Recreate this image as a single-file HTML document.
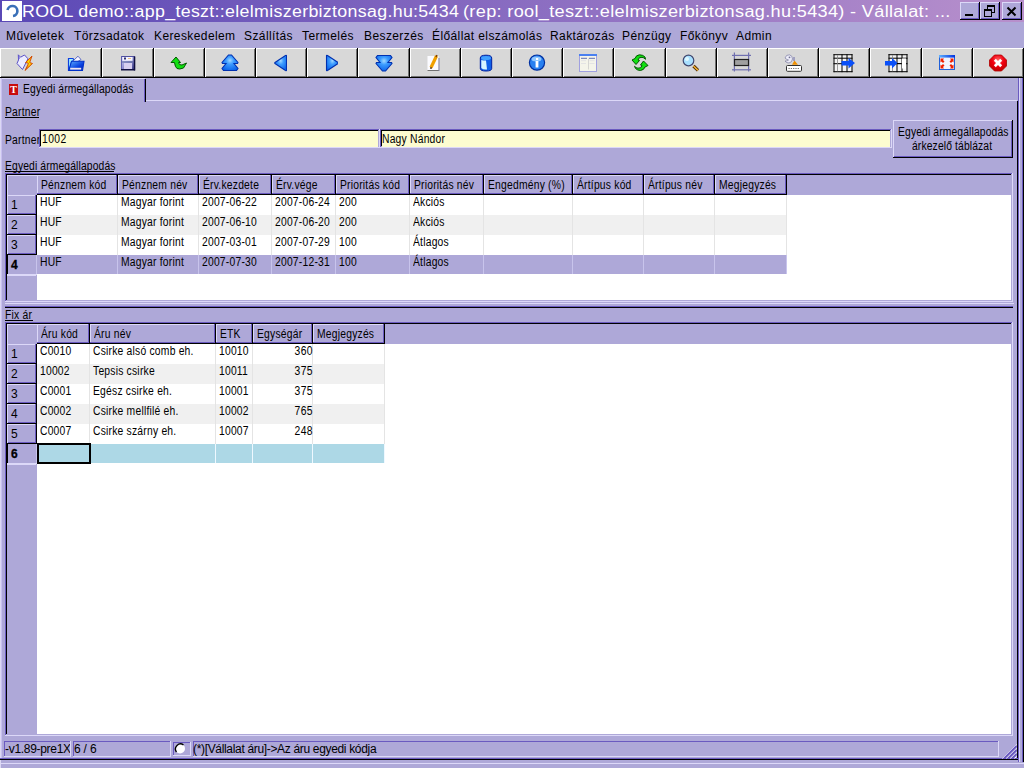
<!DOCTYPE html>
<html><head><meta charset="utf-8"><style>
html,body{margin:0;padding:0;width:1024px;height:768px;overflow:hidden;background:#aea8d8}
body{position:relative;font-family:"Liberation Sans",sans-serif}
div{position:absolute}
.t{white-space:nowrap}
svg{position:absolute}
</style></head><body>
<div style="left:0px;top:0px;width:1024px;height:22px;background:linear-gradient(90deg,#5a48b6,#b890cc);"></div>
<div style="left:2px;top:1px;width:20px;height:20px;background:#ffffff;"></div>
<svg style="position:absolute;left:2px;top:1px" width="20" height="20" viewBox="0 0 20 20"><path d="M5.5 9 A5 5 0 1 1 11 15" fill="none" stroke="#3a70b8" stroke-width="2.6"/></svg>
<div class="t" style="left:22px;top:2.45px;font-size:16px;line-height:20px;color:#fff;letter-spacing:0.3px;transform:scaleX(1.11);transform-origin:0 0;">ROOL demo::app_teszt::elelmiszerbiztonsag.hu:5434</div>
<div class="t" style="left:463px;top:2.45px;font-size:16px;line-height:20px;color:#fff;letter-spacing:0.3px;transform:scaleX(1.131);transform-origin:0 0;">(rep: rool_teszt::elelmiszerbiztonsag.hu:5434) - Vállalat: ...</div>
<div style="left:960px;top:2px;width:20px;height:18px;background:#aea8d8;"></div>
<div style="left:960px;top:2px;width:20px;height:1px;background:#dcd8f8;"></div>
<div style="left:960px;top:2px;width:1px;height:18px;background:#dcd8f8;"></div>
<div style="left:960px;top:19px;width:20px;height:1px;background:#000000;"></div>
<div style="left:979px;top:2px;width:1px;height:18px;background:#000000;"></div>
<div style="left:961px;top:18px;width:18px;height:1px;background:#6a5ac0;"></div>
<div style="left:978px;top:3px;width:1px;height:16px;background:#6a5ac0;"></div>
<div style="left:980px;top:2px;width:20px;height:18px;background:#aea8d8;"></div>
<div style="left:980px;top:2px;width:20px;height:1px;background:#dcd8f8;"></div>
<div style="left:980px;top:2px;width:1px;height:18px;background:#dcd8f8;"></div>
<div style="left:980px;top:19px;width:20px;height:1px;background:#000000;"></div>
<div style="left:999px;top:2px;width:1px;height:18px;background:#000000;"></div>
<div style="left:981px;top:18px;width:18px;height:1px;background:#6a5ac0;"></div>
<div style="left:998px;top:3px;width:1px;height:16px;background:#6a5ac0;"></div>
<div style="left:1002px;top:2px;width:20px;height:18px;background:#aea8d8;"></div>
<div style="left:1002px;top:2px;width:20px;height:1px;background:#dcd8f8;"></div>
<div style="left:1002px;top:2px;width:1px;height:18px;background:#dcd8f8;"></div>
<div style="left:1002px;top:19px;width:20px;height:1px;background:#000000;"></div>
<div style="left:1021px;top:2px;width:1px;height:18px;background:#000000;"></div>
<div style="left:1003px;top:18px;width:18px;height:1px;background:#6a5ac0;"></div>
<div style="left:1020px;top:3px;width:1px;height:16px;background:#6a5ac0;"></div>
<div style="left:965px;top:14px;width:8px;height:2px;background:#000000;"></div>
<div style="left:987px;top:5px;width:6px;height:5px;border:1px solid #000;border-top-width:2px"></div>
<div style="left:984px;top:9px;width:6px;height:5px;border:1px solid #000;border-top-width:2px;background:#aea8d8"></div>
<svg style="position:absolute;left:1006px;top:6px" width="11" height="11" viewBox="0 0 11 11"><path d="M1.5 1.5 L9.5 9.5 M9.5 1.5 L1.5 9.5" stroke="#000" stroke-width="2"/></svg>
<div style="left:0px;top:22px;width:1024px;height:26px;background:#aea8d8;"></div>
<div class="t" style="left:6px;top:25.84px;font-size:12px;line-height:20px;color:#000;letter-spacing:0.4px;">Műveletek</div>
<div class="t" style="left:74px;top:25.84px;font-size:12px;line-height:20px;color:#000;letter-spacing:0.4px;">Törzsadatok</div>
<div class="t" style="left:154px;top:25.84px;font-size:12px;line-height:20px;color:#000;letter-spacing:0.4px;">Kereskedelem</div>
<div class="t" style="left:244px;top:25.84px;font-size:12px;line-height:20px;color:#000;letter-spacing:0.4px;">Szállítás</div>
<div class="t" style="left:302px;top:25.84px;font-size:12px;line-height:20px;color:#000;letter-spacing:0.4px;">Termelés</div>
<div class="t" style="left:364px;top:25.84px;font-size:12px;line-height:20px;color:#000;letter-spacing:0.4px;">Beszerzés</div>
<div class="t" style="left:432px;top:25.84px;font-size:12px;line-height:20px;color:#000;letter-spacing:0.4px;">Élőállat elszámolás</div>
<div class="t" style="left:550px;top:25.84px;font-size:12px;line-height:20px;color:#000;letter-spacing:0.4px;">Raktározás</div>
<div class="t" style="left:622px;top:25.84px;font-size:12px;line-height:20px;color:#000;letter-spacing:0.4px;">Pénzügy</div>
<div class="t" style="left:680px;top:25.84px;font-size:12px;line-height:20px;color:#000;letter-spacing:0.4px;">Főkönyv</div>
<div class="t" style="left:736px;top:25.84px;font-size:12px;line-height:20px;color:#000;letter-spacing:0.4px;">Admin</div>
<div style="left:0px;top:48px;width:51px;height:30px;background:#d8d8d8;"></div>
<div style="left:0px;top:48px;width:51px;height:1px;background:#ffffff;"></div>
<div style="left:0px;top:48px;width:1px;height:30px;background:#ffffff;"></div>
<div style="left:0px;top:77px;width:51px;height:1px;background:#000000;"></div>
<div style="left:50px;top:48px;width:1px;height:30px;background:#000000;"></div>
<div style="left:1px;top:76px;width:49px;height:1px;background:#707070;"></div>
<div style="left:49px;top:49px;width:1px;height:28px;background:#707070;"></div>
<div style="left:51px;top:48px;width:51px;height:30px;background:#d8d8d8;"></div>
<div style="left:51px;top:48px;width:51px;height:1px;background:#ffffff;"></div>
<div style="left:51px;top:48px;width:1px;height:30px;background:#ffffff;"></div>
<div style="left:51px;top:77px;width:51px;height:1px;background:#000000;"></div>
<div style="left:101px;top:48px;width:1px;height:30px;background:#000000;"></div>
<div style="left:52px;top:76px;width:49px;height:1px;background:#707070;"></div>
<div style="left:100px;top:49px;width:1px;height:28px;background:#707070;"></div>
<div style="left:102px;top:48px;width:52px;height:30px;background:#d8d8d8;"></div>
<div style="left:102px;top:48px;width:52px;height:1px;background:#ffffff;"></div>
<div style="left:102px;top:48px;width:1px;height:30px;background:#ffffff;"></div>
<div style="left:102px;top:77px;width:52px;height:1px;background:#000000;"></div>
<div style="left:153px;top:48px;width:1px;height:30px;background:#000000;"></div>
<div style="left:103px;top:76px;width:50px;height:1px;background:#707070;"></div>
<div style="left:152px;top:49px;width:1px;height:28px;background:#707070;"></div>
<div style="left:154px;top:48px;width:51px;height:30px;background:#d8d8d8;"></div>
<div style="left:154px;top:48px;width:51px;height:1px;background:#ffffff;"></div>
<div style="left:154px;top:48px;width:1px;height:30px;background:#ffffff;"></div>
<div style="left:154px;top:77px;width:51px;height:1px;background:#000000;"></div>
<div style="left:204px;top:48px;width:1px;height:30px;background:#000000;"></div>
<div style="left:155px;top:76px;width:49px;height:1px;background:#707070;"></div>
<div style="left:203px;top:49px;width:1px;height:28px;background:#707070;"></div>
<div style="left:205px;top:48px;width:51px;height:30px;background:#d8d8d8;"></div>
<div style="left:205px;top:48px;width:51px;height:1px;background:#ffffff;"></div>
<div style="left:205px;top:48px;width:1px;height:30px;background:#ffffff;"></div>
<div style="left:205px;top:77px;width:51px;height:1px;background:#000000;"></div>
<div style="left:255px;top:48px;width:1px;height:30px;background:#000000;"></div>
<div style="left:206px;top:76px;width:49px;height:1px;background:#707070;"></div>
<div style="left:254px;top:49px;width:1px;height:28px;background:#707070;"></div>
<div style="left:256px;top:48px;width:51px;height:30px;background:#d8d8d8;"></div>
<div style="left:256px;top:48px;width:51px;height:1px;background:#ffffff;"></div>
<div style="left:256px;top:48px;width:1px;height:30px;background:#ffffff;"></div>
<div style="left:256px;top:77px;width:51px;height:1px;background:#000000;"></div>
<div style="left:306px;top:48px;width:1px;height:30px;background:#000000;"></div>
<div style="left:257px;top:76px;width:49px;height:1px;background:#707070;"></div>
<div style="left:305px;top:49px;width:1px;height:28px;background:#707070;"></div>
<div style="left:307px;top:48px;width:51px;height:30px;background:#d8d8d8;"></div>
<div style="left:307px;top:48px;width:51px;height:1px;background:#ffffff;"></div>
<div style="left:307px;top:48px;width:1px;height:30px;background:#ffffff;"></div>
<div style="left:307px;top:77px;width:51px;height:1px;background:#000000;"></div>
<div style="left:357px;top:48px;width:1px;height:30px;background:#000000;"></div>
<div style="left:308px;top:76px;width:49px;height:1px;background:#707070;"></div>
<div style="left:356px;top:49px;width:1px;height:28px;background:#707070;"></div>
<div style="left:358px;top:48px;width:52px;height:30px;background:#d8d8d8;"></div>
<div style="left:358px;top:48px;width:52px;height:1px;background:#ffffff;"></div>
<div style="left:358px;top:48px;width:1px;height:30px;background:#ffffff;"></div>
<div style="left:358px;top:77px;width:52px;height:1px;background:#000000;"></div>
<div style="left:409px;top:48px;width:1px;height:30px;background:#000000;"></div>
<div style="left:359px;top:76px;width:50px;height:1px;background:#707070;"></div>
<div style="left:408px;top:49px;width:1px;height:28px;background:#707070;"></div>
<div style="left:410px;top:48px;width:51px;height:30px;background:#d8d8d8;"></div>
<div style="left:410px;top:48px;width:51px;height:1px;background:#ffffff;"></div>
<div style="left:410px;top:48px;width:1px;height:30px;background:#ffffff;"></div>
<div style="left:410px;top:77px;width:51px;height:1px;background:#000000;"></div>
<div style="left:460px;top:48px;width:1px;height:30px;background:#000000;"></div>
<div style="left:411px;top:76px;width:49px;height:1px;background:#707070;"></div>
<div style="left:459px;top:49px;width:1px;height:28px;background:#707070;"></div>
<div style="left:461px;top:48px;width:51px;height:30px;background:#d8d8d8;"></div>
<div style="left:461px;top:48px;width:51px;height:1px;background:#ffffff;"></div>
<div style="left:461px;top:48px;width:1px;height:30px;background:#ffffff;"></div>
<div style="left:461px;top:77px;width:51px;height:1px;background:#000000;"></div>
<div style="left:511px;top:48px;width:1px;height:30px;background:#000000;"></div>
<div style="left:462px;top:76px;width:49px;height:1px;background:#707070;"></div>
<div style="left:510px;top:49px;width:1px;height:28px;background:#707070;"></div>
<div style="left:512px;top:48px;width:51px;height:30px;background:#d8d8d8;"></div>
<div style="left:512px;top:48px;width:51px;height:1px;background:#ffffff;"></div>
<div style="left:512px;top:48px;width:1px;height:30px;background:#ffffff;"></div>
<div style="left:512px;top:77px;width:51px;height:1px;background:#000000;"></div>
<div style="left:562px;top:48px;width:1px;height:30px;background:#000000;"></div>
<div style="left:513px;top:76px;width:49px;height:1px;background:#707070;"></div>
<div style="left:561px;top:49px;width:1px;height:28px;background:#707070;"></div>
<div style="left:563px;top:48px;width:51px;height:30px;background:#d8d8d8;"></div>
<div style="left:563px;top:48px;width:51px;height:1px;background:#ffffff;"></div>
<div style="left:563px;top:48px;width:1px;height:30px;background:#ffffff;"></div>
<div style="left:563px;top:77px;width:51px;height:1px;background:#000000;"></div>
<div style="left:613px;top:48px;width:1px;height:30px;background:#000000;"></div>
<div style="left:564px;top:76px;width:49px;height:1px;background:#707070;"></div>
<div style="left:612px;top:49px;width:1px;height:28px;background:#707070;"></div>
<div style="left:614px;top:48px;width:52px;height:30px;background:#d8d8d8;"></div>
<div style="left:614px;top:48px;width:52px;height:1px;background:#ffffff;"></div>
<div style="left:614px;top:48px;width:1px;height:30px;background:#ffffff;"></div>
<div style="left:614px;top:77px;width:52px;height:1px;background:#000000;"></div>
<div style="left:665px;top:48px;width:1px;height:30px;background:#000000;"></div>
<div style="left:615px;top:76px;width:50px;height:1px;background:#707070;"></div>
<div style="left:664px;top:49px;width:1px;height:28px;background:#707070;"></div>
<div style="left:666px;top:48px;width:51px;height:30px;background:#d8d8d8;"></div>
<div style="left:666px;top:48px;width:51px;height:1px;background:#ffffff;"></div>
<div style="left:666px;top:48px;width:1px;height:30px;background:#ffffff;"></div>
<div style="left:666px;top:77px;width:51px;height:1px;background:#000000;"></div>
<div style="left:716px;top:48px;width:1px;height:30px;background:#000000;"></div>
<div style="left:667px;top:76px;width:49px;height:1px;background:#707070;"></div>
<div style="left:715px;top:49px;width:1px;height:28px;background:#707070;"></div>
<div style="left:717px;top:48px;width:51px;height:30px;background:#d8d8d8;"></div>
<div style="left:717px;top:48px;width:51px;height:1px;background:#ffffff;"></div>
<div style="left:717px;top:48px;width:1px;height:30px;background:#ffffff;"></div>
<div style="left:717px;top:77px;width:51px;height:1px;background:#000000;"></div>
<div style="left:767px;top:48px;width:1px;height:30px;background:#000000;"></div>
<div style="left:718px;top:76px;width:49px;height:1px;background:#707070;"></div>
<div style="left:766px;top:49px;width:1px;height:28px;background:#707070;"></div>
<div style="left:768px;top:48px;width:51px;height:30px;background:#d8d8d8;"></div>
<div style="left:768px;top:48px;width:51px;height:1px;background:#ffffff;"></div>
<div style="left:768px;top:48px;width:1px;height:30px;background:#ffffff;"></div>
<div style="left:768px;top:77px;width:51px;height:1px;background:#000000;"></div>
<div style="left:818px;top:48px;width:1px;height:30px;background:#000000;"></div>
<div style="left:769px;top:76px;width:49px;height:1px;background:#707070;"></div>
<div style="left:817px;top:49px;width:1px;height:28px;background:#707070;"></div>
<div style="left:819px;top:48px;width:51px;height:30px;background:#d8d8d8;"></div>
<div style="left:819px;top:48px;width:51px;height:1px;background:#ffffff;"></div>
<div style="left:819px;top:48px;width:1px;height:30px;background:#ffffff;"></div>
<div style="left:819px;top:77px;width:51px;height:1px;background:#000000;"></div>
<div style="left:869px;top:48px;width:1px;height:30px;background:#000000;"></div>
<div style="left:820px;top:76px;width:49px;height:1px;background:#707070;"></div>
<div style="left:868px;top:49px;width:1px;height:28px;background:#707070;"></div>
<div style="left:870px;top:48px;width:52px;height:30px;background:#d8d8d8;"></div>
<div style="left:870px;top:48px;width:52px;height:1px;background:#ffffff;"></div>
<div style="left:870px;top:48px;width:1px;height:30px;background:#ffffff;"></div>
<div style="left:870px;top:77px;width:52px;height:1px;background:#000000;"></div>
<div style="left:921px;top:48px;width:1px;height:30px;background:#000000;"></div>
<div style="left:871px;top:76px;width:50px;height:1px;background:#707070;"></div>
<div style="left:920px;top:49px;width:1px;height:28px;background:#707070;"></div>
<div style="left:922px;top:48px;width:51px;height:30px;background:#d8d8d8;"></div>
<div style="left:922px;top:48px;width:51px;height:1px;background:#ffffff;"></div>
<div style="left:922px;top:48px;width:1px;height:30px;background:#ffffff;"></div>
<div style="left:922px;top:77px;width:51px;height:1px;background:#000000;"></div>
<div style="left:972px;top:48px;width:1px;height:30px;background:#000000;"></div>
<div style="left:923px;top:76px;width:49px;height:1px;background:#707070;"></div>
<div style="left:971px;top:49px;width:1px;height:28px;background:#707070;"></div>
<div style="left:973px;top:48px;width:51px;height:30px;background:#d8d8d8;"></div>
<div style="left:973px;top:48px;width:51px;height:1px;background:#ffffff;"></div>
<div style="left:973px;top:48px;width:1px;height:30px;background:#ffffff;"></div>
<div style="left:973px;top:77px;width:51px;height:1px;background:#000000;"></div>
<div style="left:1023px;top:48px;width:1px;height:30px;background:#000000;"></div>
<div style="left:974px;top:76px;width:49px;height:1px;background:#707070;"></div>
<div style="left:1022px;top:49px;width:1px;height:28px;background:#707070;"></div>
<svg style="position:absolute;left:10px;top:50px" width="32" height="24" viewBox="0 0 32 24"><polygon points="8.3,4.8 10.5,7.2 14.5,5 18,8.8 12.5,19.5 7,13.5 8.5,10" fill="#ececff" stroke="#5a50c8" stroke-width="1"/><polygon points="8.5,6 10,8 8.5,10" fill="#6a60d0"/><defs><radialGradient id="lg" cx="0.55" cy="0.45" r="0.6"><stop offset="0" stop-color="#fff000"/><stop offset="0.6" stop-color="#f8a000"/><stop offset="1" stop-color="#e05000"/></radialGradient></defs><polygon points="22,6 15.5,12.5 18.5,13.3 15,20.5 22.5,13.5 19.7,12.5 22,6" fill="url(#lg)" stroke="#d04800" stroke-width="0.9"/></svg>
<svg style="position:absolute;left:60px;top:50px" width="32" height="24" viewBox="0 0 32 24"><defs><linearGradient id="fg" x1="0" y1="0" x2="1" y2="1"><stop offset="0" stop-color="#60b0ff"/><stop offset="0.6" stop-color="#0840e0"/><stop offset="1" stop-color="#0020b0"/></linearGradient></defs><polygon points="8.5,8.5 13,8.5 14,10 11.5,12 9.5,20.5 8.5,20.5" fill="#a0f0ff" stroke="#1040e0" stroke-width="1.2"/><polygon points="12.5,11.5 18,6.2 21,9.5 17,12" fill="#f8f4ff" stroke="#5060c0" stroke-width="0.9"/><polygon points="11.5,11.2 24,11.2 22.5,20.5 8.8,20.5" fill="url(#fg)" stroke="#0030c8" stroke-width="1.1"/><rect x="10.2" y="17.8" width="11" height="1.8" fill="#f0e4f0"/></svg>
<svg style="position:absolute;left:112px;top:50px" width="32" height="24" viewBox="0 0 32 24"><defs><linearGradient id="fl" x1="0" y1="0" x2="1" y2="1"><stop offset="0" stop-color="#d8d8ff"/><stop offset="0.5" stop-color="#9090d0"/><stop offset="1" stop-color="#303080"/></linearGradient></defs><rect x="9" y="6" width="14" height="14" fill="url(#fl)"/><rect x="9" y="6" width="14" height="1" fill="#5050a0"/><rect x="9" y="6" width="1" height="14" fill="#6060b0"/><rect x="9" y="19" width="14" height="1.5" fill="#101040"/><rect x="21.8" y="6.5" width="1.5" height="14" fill="#101040"/><rect x="10.5" y="7" width="10" height="3.8" fill="#f4f4ff"/><rect x="12" y="7.5" width="2" height="2" fill="#303070"/><rect x="16" y="8" width="3" height="1" fill="#f0c080"/><rect x="12" y="13" width="8" height="6" fill="#d8d0f0"/><rect x="10" y="11.5" width="11" height="1" fill="#6070a0"/></svg>
<svg style="position:absolute;left:163px;top:50px" width="32" height="24" viewBox="0 0 32 24"><path d="M8,12.5 L13,7 L17.5,12.5 L15.5,12.5 Q16,15.5 19,15 L23.5,13 L20.5,18 Q16,19.8 14,18.5 Q12,17 11.5,12.5 Z" fill="#10e010" stroke="#005800" stroke-width="1"/></svg>
<svg style="position:absolute;left:214px;top:50px" width="32" height="24" viewBox="0 0 32 24"><defs><radialGradient id="bg" cx="0.5" cy="0.35" r="0.7"><stop offset="0" stop-color="#a0d8ff"/><stop offset="0.35" stop-color="#3c9cff"/><stop offset="1" stop-color="#0860e8"/></radialGradient></defs><polygon points="8,12.5 14.5,5 17.5,5 24,12.5 23.5,13.5 20,13.5 24,18.5 22.5,20.5 9.5,20.5 8,18.5 12,13.5 8.5,13.5" fill="url(#bg)" stroke="#0030b0" stroke-width="1.1"/></svg>
<svg style="position:absolute;left:255px;top:50px" width="32" height="24" viewBox="0 0 32 24"><path d="M20,5.5 L31.5,5.5 L31.5,20.5 Z" fill="none"/><path d="M31.5,5.5 L31.5,20.5 Q31.5,21 30.5,20.5 L20,13.5 Q19.5,13 20,12.5 L30.5,5.5 Q31.5,5 31.5,5.5 Z" transform="translate(0,0)" fill="url(#bg)" stroke="#0030b0" stroke-width="1.1"/></svg>
<svg style="position:absolute;left:306px;top:50px" width="32" height="24" viewBox="0 0 32 24"><path d="M20.5,5.5 L20.5,20.5 Q20.5,21 21.5,20.5 L32,13.5 Q32.5,13 32,12.5 L21.5,5.5 Q20.5,5 20.5,5.5 Z" fill="url(#bg)" stroke="#0030b0" stroke-width="1.1"/></svg>
<svg style="position:absolute;left:357px;top:50px" width="40" height="24" viewBox="0 0 40 24"><polygon points="19,13.5 25.5,21 28.5,21 35,13.5 34.5,12.5 31,12.5 35,7.5 33.5,5.5 20.5,5.5 19,7.5 23,12.5 19.5,12.5" fill="url(#bg)" stroke="#0030b0" stroke-width="1.1"/></svg>
<svg style="position:absolute;left:420px;top:50px" width="32" height="24" viewBox="0 0 32 24"><rect x="7.5" y="6" width="11" height="14.5" fill="#fbfbff"/><rect x="7.5" y="20" width="11.5" height="1" fill="#707070"/><rect x="18.5" y="8" width="1" height="13" fill="#8080a0"/><line x1="16.5" y1="6" x2="11" y2="17.5" stroke="#f0a000" stroke-width="3.2"/><line x1="17" y1="5.2" x2="16" y2="7" stroke="#804000" stroke-width="1.6"/><circle cx="11" cy="18" r="1" fill="#604020"/></svg>
<svg style="position:absolute;left:472px;top:50px" width="32" height="24" viewBox="0 0 32 24"><path d="M8.3,8 Q8.3,5.2 14,5.2 Q19.7,5.2 19.7,8 L19.7,18.5 Q19.7,21 14,21 Q8.3,21 8.3,18.5 Z" fill="#1060e8" stroke="#0020a0" stroke-width="1"/><ellipse cx="14" cy="8" rx="5" ry="2" fill="#40a0ff"/><path d="M9.3,10 L9.3,18 Q11,20 15,19.5 L14,10.5 Q11,10.5 9.3,10 Z" fill="#d8f4ff"/></svg>
<svg style="position:absolute;left:523px;top:50px" width="32" height="24" viewBox="0 0 32 24"><circle cx="14" cy="12.6" r="7.6" fill="#2880f0" stroke="#0030a0" stroke-width="1.2"/><ellipse cx="13.5" cy="9" rx="5" ry="2.5" fill="#90c8ff"/><rect x="12.6" y="11" width="2.8" height="6.5" fill="#fff"/><rect x="13" y="8" width="2.2" height="2" fill="#fff"/></svg>
<svg style="position:absolute;left:574px;top:50px" width="32" height="24" viewBox="0 0 32 24"><rect x="5.5" y="4.5" width="17" height="17" fill="#f4f4ea" stroke="#a0a0e0" stroke-width="1"/><rect x="5" y="4" width="18" height="2" fill="#4a80f0"/><rect x="7" y="7.8" width="6" height="1" fill="#6070b0"/><rect x="15" y="7.8" width="6" height="1" fill="#6070b0"/><rect x="14" y="8.5" width="0.7" height="11" fill="#c8c8c8"/><rect x="7" y="10.5" width="5" height="0.6" fill="#d8d8e0"/><rect x="15.5" y="10.5" width="5" height="0.6" fill="#d8d8e0"/><rect x="7" y="13" width="5" height="0.6" fill="#d8d8e0"/><rect x="15.5" y="13" width="5" height="0.6" fill="#d8d8e0"/></svg>
<svg style="position:absolute;left:625px;top:50px" width="32" height="24" viewBox="0 0 32 24"><path d="M7,10 L11,14.5 L14.5,10.5 L13,10 Q13.5,7 17,7.3 Q19,7.5 20.5,9.3 L20,7 Q18,4.8 14.5,4.8 Q11,5 10,8.5 Z" fill="#10e010" stroke="#005800" stroke-width="1"/><path d="M23,15.5 L18.5,11 L15.5,15 L17,15.5 Q16.5,18.5 13,18.2 Q11,18 9.5,16.3 L10.5,18.5 Q12.5,20.5 15.5,20.5 Q19,20 20,17 Z" fill="#10e010" stroke="#005800" stroke-width="1"/></svg>
<svg style="position:absolute;left:676px;top:50px" width="32" height="24" viewBox="0 0 32 24"><line x1="17.5" y1="16" x2="22" y2="20.3" stroke="#402000" stroke-width="3.2"/><line x1="17.5" y1="16" x2="22" y2="20.3" stroke="#f0b030" stroke-width="1.6"/><circle cx="12.5" cy="10.5" r="5.3" fill="#a8e0ff" stroke="#404870" stroke-width="1.2"/><circle cx="11" cy="9" r="2" fill="#e0f8ff"/></svg>
<svg style="position:absolute;left:726px;top:50px" width="32" height="24" viewBox="0 0 32 24"><rect x="6" y="4.8" width="19" height="1.2" fill="#7070b0"/><rect x="6" y="19.2" width="19" height="1.2" fill="#7070b0"/><rect x="7.8" y="2.5" width="1.2" height="19" fill="#7070b0"/><rect x="22" y="2.5" width="1.2" height="19" fill="#7070b0"/><rect x="8.5" y="9.5" width="14" height="6" fill="#a0a0a0" stroke="#202020" stroke-width="1.2"/></svg>
<svg style="position:absolute;left:777px;top:50px" width="32" height="24" viewBox="0 0 32 24"><path d="M8,8 Q9,4.5 12.5,4.8 Q15.5,5.5 15.5,9 Q15,12.5 12,13 Q9,13 8,11 Q10,11.5 11.5,10 Q9.5,9.5 8,8 Z" fill="#ececf8" stroke="#8888a8" stroke-width="0.8"/><circle cx="12.5" cy="7.3" r="0.9" fill="#707090"/><polygon points="15,14.8 17.5,10.5 21,14.8" fill="#f09000"/><rect x="16.6" y="7" width="0.8" height="4" fill="#5050a0"/><rect x="9.5" y="15.5" width="15" height="5.8" rx="1" fill="#fff" stroke="#303030" stroke-width="1"/><path d="M11.5,18.5 h1.2 M13.8,18.5 h1.2 M16.1,18.5 h1.2 M18.4,18.5 h1.2 M20.7,18.5 h1.2" stroke="#707070" stroke-width="1.2"/></svg>
<svg style="position:absolute;left:828px;top:50px" width="32" height="24" viewBox="0 0 32 24"><rect x="5.5" y="4.2" width="18" height="17" fill="#f4f4f4"/><rect x="5.5" y="4.2" width="1" height="18" fill="#000"/><rect x="13.5" y="4.2" width="1" height="18" fill="#000"/><rect x="18.5" y="4.2" width="1" height="18" fill="#000"/><rect x="23.5" y="4.2" width="1" height="18" fill="#000"/><rect x="5.5" y="4.2" width="19" height="1" fill="#000"/><rect x="5.5" y="7.7" width="19" height="1" fill="#000"/><rect x="5.5" y="13.2" width="19" height="1" fill="#000"/><rect x="5.5" y="21.2" width="19" height="1" fill="#000"/><rect x="9.0" y="5.2" width="0.8" height="16" fill="#888"/><polygon points="13.5,11 20.5,11 20.5,8 27,13 20.5,18.5 20.5,15.5 13.5,15.5" fill="#0a50f8"/></svg>
<svg style="position:absolute;left:880px;top:50px" width="32" height="24" viewBox="0 0 32 24"><rect x="8.5" y="4.2" width="18" height="17" fill="#f4f4f4"/><rect x="8.5" y="4.2" width="1" height="18" fill="#000"/><rect x="16.5" y="4.2" width="1" height="18" fill="#000"/><rect x="21.5" y="4.2" width="1" height="18" fill="#000"/><rect x="26.5" y="4.2" width="1" height="18" fill="#000"/><rect x="8.5" y="4.2" width="19" height="1" fill="#000"/><rect x="8.5" y="7.7" width="19" height="1" fill="#000"/><rect x="8.5" y="13.2" width="19" height="1" fill="#000"/><rect x="8.5" y="21.2" width="19" height="1" fill="#000"/><rect x="12.0" y="5.2" width="0.8" height="16" fill="#888"/><rect x="22" y="8.5" width="4" height="10" fill="#fff"/><polygon points="5,11 12,11 12,8 17.5,13 12,18.5 12,15.5 5,15.5" fill="#0a50f8"/><rect x="17" y="13" width="4" height="1" fill="#000"/></svg>
<svg style="position:absolute;left:931px;top:50px" width="32" height="24" viewBox="0 0 32 24"><defs><linearGradient id="wt" x1="0" y1="0" x2="1" y2="0"><stop offset="0" stop-color="#60b0ff"/><stop offset="1" stop-color="#0030e0"/></linearGradient></defs><rect x="8.5" y="5.5" width="15" height="14" fill="#f0f4ff" stroke="#2060d8" stroke-width="1"/><rect x="8" y="5" width="16" height="2.6" fill="url(#wt)"/><polygon points="9.5,8.5 13,8.5 12,10 13.5,11.5 12,13 10.5,11.5 9.5,12.5" fill="#f02000"/><polygon points="22.5,8.5 19,8.5 20,10 18.5,11.5 20,13 21.5,11.5 22.5,12.5" fill="#f02000"/><polygon points="9.5,18.5 13,18.5 12,17 13.5,15.5 12,14 10.5,15.5 9.5,14.5" fill="#f02000"/><polygon points="22.5,18.5 19,18.5 20,17 18.5,15.5 20,14 21.5,15.5 22.5,14.5" fill="#f02000"/></svg>
<svg style="position:absolute;left:983px;top:50px" width="32" height="24" viewBox="0 0 32 24"><defs><radialGradient id="rs" cx="0.5" cy="0.3" r="0.7"><stop offset="0" stop-color="#ff6060"/><stop offset="0.5" stop-color="#f00010"/><stop offset="1" stop-color="#c00000"/></radialGradient></defs><polygon points="11.5,5 18.5,5 23.5,10 23.5,16 18.5,21 11.5,21 6.5,16 6.5,10" fill="url(#rs)" stroke="#b00000" stroke-width="0.8"/><path d="M11.8,9.8 L18.2,16.2 M18.2,9.8 L11.8,16.2" stroke="#fff" stroke-width="2.8"/></svg>
<div style="left:0px;top:78px;width:1024px;height:690px;background:#aea8d8;"></div>
<div style="left:0px;top:78px;width:145px;height:1px;background:#dcd8f8;"></div>
<div style="left:144px;top:79px;width:1px;height:23px;background:#6a5ac0;"></div>
<div style="left:145px;top:79px;width:1px;height:23px;background:#000000;"></div>
<div style="left:146px;top:100px;width:871px;height:1px;background:#dcd8f8;"></div>
<div style="left:9px;top:84px;width:9px;height:11px;background:#c80c0c;"></div>
<div class="t" style="left:9px;top:81.5px;width:9px;text-align:center;font-family:'Liberation Serif',serif;font-weight:bold;font-size:10px;line-height:16px;color:#fff">T</div>
<div class="t" style="left:23px;top:78.84px;font-size:12px;line-height:20px;color:#000;transform:scaleX(0.86);transform-origin:0 0;letter-spacing:0.15px;">Egyedi ármegállapodás</div>
<div style="left:0px;top:78px;width:1px;height:690px;background:#dcd8f4;"></div>
<div style="left:1px;top:78px;width:1px;height:682px;background:#c8c0f0;"></div>
<div style="left:1017px;top:101px;width:1px;height:659px;background:#000000;"></div>
<div style="left:1018px;top:78px;width:1px;height:684px;background:#6a5ac0;"></div>
<div style="left:1019px;top:78px;width:1px;height:684px;background:#dcd8f8;"></div>
<div style="left:1022px;top:78px;width:1px;height:684px;background:#6a5ac0;"></div>
<div style="left:1023px;top:78px;width:1px;height:684px;background:#000000;"></div>
<div style="left:0px;top:758px;width:1018px;height:1px;background:#6a5ac0;"></div>
<div style="left:0px;top:759px;width:1018px;height:1px;background:#000000;"></div>
<div style="left:0px;top:763px;width:1024px;height:1px;background:#dcd8f8;"></div>
<div class="t" style="left:5px;top:101.84px;font-size:12px;line-height:20px;color:#000;transform:scaleX(0.86);transform-origin:0 0;letter-spacing:0.25px;">Partner</div>
<div style="left:5px;top:117px;width:34px;height:1px;background:#000000;"></div>
<div class="t" style="left:5px;top:129.84px;font-size:12px;line-height:20px;color:#000;transform:scaleX(0.86);transform-origin:0 0;letter-spacing:0.25px;">Partner</div>
<div style="left:39px;top:129px;width:341px;height:19px;background:#dcd8f8;"></div>
<div style="left:39px;top:129px;width:340px;height:1px;background:#6a5ac0;"></div>
<div style="left:39px;top:129px;width:1px;height:18px;background:#6a5ac0;"></div>
<div style="left:40px;top:130px;width:339px;height:17px;background:#aea8d8;"></div>
<div style="left:40px;top:130px;width:338px;height:1px;background:#000000;"></div>
<div style="left:40px;top:130px;width:1px;height:16px;background:#000000;"></div>
<div style="left:41px;top:131px;width:337px;height:16px;background:#fcfcd0;"></div>
<div class="t" style="left:42px;top:128.84px;font-size:12px;line-height:20px;color:#000;transform:scaleX(0.86);transform-origin:0 0;letter-spacing:0.45px;">1002</div>
<div style="left:380px;top:129px;width:512px;height:19px;background:#dcd8f8;"></div>
<div style="left:380px;top:129px;width:511px;height:1px;background:#6a5ac0;"></div>
<div style="left:380px;top:129px;width:1px;height:18px;background:#6a5ac0;"></div>
<div style="left:381px;top:130px;width:510px;height:17px;background:#aea8d8;"></div>
<div style="left:381px;top:130px;width:509px;height:1px;background:#000000;"></div>
<div style="left:381px;top:130px;width:1px;height:16px;background:#000000;"></div>
<div style="left:382px;top:131px;width:508px;height:16px;background:#fcfcd0;"></div>
<div class="t" style="left:382px;top:128.84px;font-size:12px;line-height:20px;color:#000;transform:scaleX(0.86);transform-origin:0 0;letter-spacing:0.25px;">Nagy Nándor</div>
<div style="left:893px;top:120px;width:120px;height:38px;background:#aea8d8;"></div>
<div style="left:893px;top:120px;width:120px;height:1px;background:#dcd8f8;"></div>
<div style="left:893px;top:120px;width:1px;height:38px;background:#dcd8f8;"></div>
<div style="left:893px;top:157px;width:120px;height:1px;background:#000000;"></div>
<div style="left:1012px;top:120px;width:1px;height:38px;background:#000000;"></div>
<div style="left:894px;top:156px;width:118px;height:1px;background:#6a5ac0;"></div>
<div style="left:1011px;top:121px;width:1px;height:36px;background:#6a5ac0;"></div>
<div class="t" style="left:898px;top:121.84px;font-size:12px;line-height:20px;color:#000;transform:scaleX(0.86);transform-origin:0 0;letter-spacing:0.15px;">Egyedi ármegállapodás</div>
<div class="t" style="left:912px;top:135.84px;font-size:12px;line-height:20px;color:#000;transform:scaleX(0.86);transform-origin:0 0;letter-spacing:0.15px;">árkezelő táblázat</div>
<div class="t" style="left:5px;top:155.84px;font-size:12px;line-height:20px;color:#000;transform:scaleX(0.86);transform-origin:0 0;letter-spacing:0.15px;">Egyedi ármegállapodás</div>
<div style="left:5px;top:171px;width:109px;height:1px;background:#000000;"></div>
<div style="left:5px;top:173px;width:1008px;height:129px;background:#dcd8f8;"></div>
<div style="left:5px;top:173px;width:1007px;height:1px;background:#6a5ac0;"></div>
<div style="left:5px;top:173px;width:1px;height:128px;background:#6a5ac0;"></div>
<div style="left:6px;top:174px;width:1006px;height:127px;background:#aea8d8;"></div>
<div style="left:6px;top:174px;width:1005px;height:1px;background:#000000;"></div>
<div style="left:6px;top:174px;width:1px;height:126px;background:#000000;"></div>
<div style="left:37px;top:195px;width:974px;height:105px;background:#ffffff;"></div>
<div style="left:7px;top:175px;width:779px;height:1px;background:#dcd8f8;"></div>
<div style="left:7px;top:175px;width:1px;height:20px;background:#dcd8f8;"></div>
<div style="left:37px;top:175px;width:1px;height:20px;background:#dcd8f8;"></div>
<div style="left:37px;top:193px;width:81px;height:1px;background:#6a5ac0;"></div>
<div style="left:37px;top:194px;width:81px;height:1px;background:#000000;"></div>
<div style="left:116px;top:175px;width:1px;height:19px;background:#6a5ac0;"></div>
<div style="left:117px;top:175px;width:1px;height:20px;background:#000000;"></div>
<div class="t" style="left:41px;top:174.84px;font-size:12px;line-height:20px;color:#000;transform:scaleX(0.86);transform-origin:0 0;letter-spacing:0.25px;">Pénznem kód</div>
<div style="left:118px;top:175px;width:1px;height:20px;background:#dcd8f8;"></div>
<div style="left:118px;top:193px;width:81px;height:1px;background:#6a5ac0;"></div>
<div style="left:118px;top:194px;width:81px;height:1px;background:#000000;"></div>
<div style="left:197px;top:175px;width:1px;height:19px;background:#6a5ac0;"></div>
<div style="left:198px;top:175px;width:1px;height:20px;background:#000000;"></div>
<div class="t" style="left:122px;top:174.84px;font-size:12px;line-height:20px;color:#000;transform:scaleX(0.86);transform-origin:0 0;letter-spacing:0.25px;">Pénznem név</div>
<div style="left:199px;top:175px;width:1px;height:20px;background:#dcd8f8;"></div>
<div style="left:199px;top:193px;width:73px;height:1px;background:#6a5ac0;"></div>
<div style="left:199px;top:194px;width:73px;height:1px;background:#000000;"></div>
<div style="left:270px;top:175px;width:1px;height:19px;background:#6a5ac0;"></div>
<div style="left:271px;top:175px;width:1px;height:20px;background:#000000;"></div>
<div class="t" style="left:203px;top:174.84px;font-size:12px;line-height:20px;color:#000;transform:scaleX(0.86);transform-origin:0 0;letter-spacing:0.25px;">Érv.kezdete</div>
<div style="left:272px;top:175px;width:1px;height:20px;background:#dcd8f8;"></div>
<div style="left:272px;top:193px;width:64px;height:1px;background:#6a5ac0;"></div>
<div style="left:272px;top:194px;width:64px;height:1px;background:#000000;"></div>
<div style="left:334px;top:175px;width:1px;height:19px;background:#6a5ac0;"></div>
<div style="left:335px;top:175px;width:1px;height:20px;background:#000000;"></div>
<div class="t" style="left:276px;top:174.84px;font-size:12px;line-height:20px;color:#000;transform:scaleX(0.86);transform-origin:0 0;letter-spacing:0.25px;">Érv.vége</div>
<div style="left:336px;top:175px;width:1px;height:20px;background:#dcd8f8;"></div>
<div style="left:336px;top:193px;width:74px;height:1px;background:#6a5ac0;"></div>
<div style="left:336px;top:194px;width:74px;height:1px;background:#000000;"></div>
<div style="left:408px;top:175px;width:1px;height:19px;background:#6a5ac0;"></div>
<div style="left:409px;top:175px;width:1px;height:20px;background:#000000;"></div>
<div class="t" style="left:340px;top:174.84px;font-size:12px;line-height:20px;color:#000;transform:scaleX(0.86);transform-origin:0 0;letter-spacing:0.25px;">Prioritás kód</div>
<div style="left:410px;top:175px;width:1px;height:20px;background:#dcd8f8;"></div>
<div style="left:410px;top:193px;width:74px;height:1px;background:#6a5ac0;"></div>
<div style="left:410px;top:194px;width:74px;height:1px;background:#000000;"></div>
<div style="left:482px;top:175px;width:1px;height:19px;background:#6a5ac0;"></div>
<div style="left:483px;top:175px;width:1px;height:20px;background:#000000;"></div>
<div class="t" style="left:414px;top:174.84px;font-size:12px;line-height:20px;color:#000;transform:scaleX(0.86);transform-origin:0 0;letter-spacing:0.25px;">Prioritás név</div>
<div style="left:484px;top:175px;width:1px;height:20px;background:#dcd8f8;"></div>
<div style="left:484px;top:193px;width:89px;height:1px;background:#6a5ac0;"></div>
<div style="left:484px;top:194px;width:89px;height:1px;background:#000000;"></div>
<div style="left:571px;top:175px;width:1px;height:19px;background:#6a5ac0;"></div>
<div style="left:572px;top:175px;width:1px;height:20px;background:#000000;"></div>
<div class="t" style="left:488px;top:174.84px;font-size:12px;line-height:20px;color:#000;transform:scaleX(0.86);transform-origin:0 0;letter-spacing:0.25px;">Engedmény (%)</div>
<div style="left:573px;top:175px;width:1px;height:20px;background:#dcd8f8;"></div>
<div style="left:573px;top:193px;width:71px;height:1px;background:#6a5ac0;"></div>
<div style="left:573px;top:194px;width:71px;height:1px;background:#000000;"></div>
<div style="left:642px;top:175px;width:1px;height:19px;background:#6a5ac0;"></div>
<div style="left:643px;top:175px;width:1px;height:20px;background:#000000;"></div>
<div class="t" style="left:577px;top:174.84px;font-size:12px;line-height:20px;color:#000;transform:scaleX(0.86);transform-origin:0 0;letter-spacing:0.25px;">Ártípus kód</div>
<div style="left:644px;top:175px;width:1px;height:20px;background:#dcd8f8;"></div>
<div style="left:644px;top:193px;width:71px;height:1px;background:#6a5ac0;"></div>
<div style="left:644px;top:194px;width:71px;height:1px;background:#000000;"></div>
<div style="left:713px;top:175px;width:1px;height:19px;background:#6a5ac0;"></div>
<div style="left:714px;top:175px;width:1px;height:20px;background:#000000;"></div>
<div class="t" style="left:648px;top:174.84px;font-size:12px;line-height:20px;color:#000;transform:scaleX(0.86);transform-origin:0 0;letter-spacing:0.25px;">Ártípus név</div>
<div style="left:715px;top:175px;width:1px;height:20px;background:#dcd8f8;"></div>
<div style="left:715px;top:193px;width:72px;height:1px;background:#6a5ac0;"></div>
<div style="left:715px;top:194px;width:72px;height:1px;background:#000000;"></div>
<div style="left:785px;top:175px;width:1px;height:19px;background:#6a5ac0;"></div>
<div style="left:786px;top:175px;width:1px;height:20px;background:#000000;"></div>
<div class="t" style="left:719px;top:174.84px;font-size:12px;line-height:20px;color:#000;transform:scaleX(0.86);transform-origin:0 0;letter-spacing:0.25px;">Megjegyzés</div>
<div style="left:37px;top:195px;width:749px;height:20px;background:#ffffff;"></div>
<div style="left:117px;top:195px;width:1px;height:20px;background:#e4e4e4;"></div>
<div style="left:198px;top:195px;width:1px;height:20px;background:#e4e4e4;"></div>
<div style="left:271px;top:195px;width:1px;height:20px;background:#e4e4e4;"></div>
<div style="left:335px;top:195px;width:1px;height:20px;background:#e4e4e4;"></div>
<div style="left:409px;top:195px;width:1px;height:20px;background:#e4e4e4;"></div>
<div style="left:483px;top:195px;width:1px;height:20px;background:#e4e4e4;"></div>
<div style="left:572px;top:195px;width:1px;height:20px;background:#e4e4e4;"></div>
<div style="left:643px;top:195px;width:1px;height:20px;background:#e4e4e4;"></div>
<div style="left:714px;top:195px;width:1px;height:20px;background:#e4e4e4;"></div>
<div style="left:786px;top:195px;width:1px;height:20px;background:#e4e4e4;"></div>
<div style="left:7px;top:195px;width:29px;height:1px;background:#dcd8f8;"></div>
<div style="left:7px;top:195px;width:1px;height:19px;background:#dcd8f8;"></div>
<div style="left:35px;top:195px;width:1px;height:20px;background:#6a5ac0;"></div>
<div style="left:36px;top:195px;width:1px;height:20px;background:#000000;"></div>
<div style="left:8px;top:213px;width:28px;height:1px;background:#6a5ac0;"></div>
<div style="left:7px;top:214px;width:30px;height:1px;background:#000000;"></div>
<div class="t" style="left:11px;top:194.84px;font-size:12px;line-height:20px;color:#000;">1</div>
<div class="t" style="left:40px;top:191.84px;font-size:12px;line-height:20px;color:#000;transform:scaleX(0.86);transform-origin:0 0;letter-spacing:0.25px;">HUF</div>
<div class="t" style="left:121px;top:191.84px;font-size:12px;line-height:20px;color:#000;transform:scaleX(0.86);transform-origin:0 0;letter-spacing:0.25px;">Magyar forint</div>
<div class="t" style="left:202px;top:191.84px;font-size:12px;line-height:20px;color:#000;transform:scaleX(0.86);transform-origin:0 0;letter-spacing:0.25px;">2007-06-22</div>
<div class="t" style="left:275px;top:191.84px;font-size:12px;line-height:20px;color:#000;transform:scaleX(0.86);transform-origin:0 0;letter-spacing:0.25px;">2007-06-24</div>
<div class="t" style="left:339px;top:191.84px;font-size:12px;line-height:20px;color:#000;transform:scaleX(0.86);transform-origin:0 0;letter-spacing:0.25px;">200</div>
<div class="t" style="left:413px;top:191.84px;font-size:12px;line-height:20px;color:#000;transform:scaleX(0.86);transform-origin:0 0;letter-spacing:0.25px;">Akciós</div>
<div style="left:37px;top:215px;width:749px;height:20px;background:#f0f0f0;"></div>
<div style="left:117px;top:215px;width:1px;height:20px;background:#e4e4e4;"></div>
<div style="left:198px;top:215px;width:1px;height:20px;background:#e4e4e4;"></div>
<div style="left:271px;top:215px;width:1px;height:20px;background:#e4e4e4;"></div>
<div style="left:335px;top:215px;width:1px;height:20px;background:#e4e4e4;"></div>
<div style="left:409px;top:215px;width:1px;height:20px;background:#e4e4e4;"></div>
<div style="left:483px;top:215px;width:1px;height:20px;background:#e4e4e4;"></div>
<div style="left:572px;top:215px;width:1px;height:20px;background:#e4e4e4;"></div>
<div style="left:643px;top:215px;width:1px;height:20px;background:#e4e4e4;"></div>
<div style="left:714px;top:215px;width:1px;height:20px;background:#e4e4e4;"></div>
<div style="left:786px;top:215px;width:1px;height:20px;background:#e4e4e4;"></div>
<div style="left:7px;top:215px;width:29px;height:1px;background:#dcd8f8;"></div>
<div style="left:7px;top:215px;width:1px;height:19px;background:#dcd8f8;"></div>
<div style="left:35px;top:215px;width:1px;height:20px;background:#6a5ac0;"></div>
<div style="left:36px;top:215px;width:1px;height:20px;background:#000000;"></div>
<div style="left:8px;top:233px;width:28px;height:1px;background:#6a5ac0;"></div>
<div style="left:7px;top:234px;width:30px;height:1px;background:#000000;"></div>
<div class="t" style="left:11px;top:214.84px;font-size:12px;line-height:20px;color:#000;">2</div>
<div class="t" style="left:40px;top:211.84px;font-size:12px;line-height:20px;color:#000;transform:scaleX(0.86);transform-origin:0 0;letter-spacing:0.25px;">HUF</div>
<div class="t" style="left:121px;top:211.84px;font-size:12px;line-height:20px;color:#000;transform:scaleX(0.86);transform-origin:0 0;letter-spacing:0.25px;">Magyar forint</div>
<div class="t" style="left:202px;top:211.84px;font-size:12px;line-height:20px;color:#000;transform:scaleX(0.86);transform-origin:0 0;letter-spacing:0.25px;">2007-06-10</div>
<div class="t" style="left:275px;top:211.84px;font-size:12px;line-height:20px;color:#000;transform:scaleX(0.86);transform-origin:0 0;letter-spacing:0.25px;">2007-06-20</div>
<div class="t" style="left:339px;top:211.84px;font-size:12px;line-height:20px;color:#000;transform:scaleX(0.86);transform-origin:0 0;letter-spacing:0.25px;">200</div>
<div class="t" style="left:413px;top:211.84px;font-size:12px;line-height:20px;color:#000;transform:scaleX(0.86);transform-origin:0 0;letter-spacing:0.25px;">Akciós</div>
<div style="left:37px;top:235px;width:749px;height:20px;background:#ffffff;"></div>
<div style="left:117px;top:235px;width:1px;height:20px;background:#e4e4e4;"></div>
<div style="left:198px;top:235px;width:1px;height:20px;background:#e4e4e4;"></div>
<div style="left:271px;top:235px;width:1px;height:20px;background:#e4e4e4;"></div>
<div style="left:335px;top:235px;width:1px;height:20px;background:#e4e4e4;"></div>
<div style="left:409px;top:235px;width:1px;height:20px;background:#e4e4e4;"></div>
<div style="left:483px;top:235px;width:1px;height:20px;background:#e4e4e4;"></div>
<div style="left:572px;top:235px;width:1px;height:20px;background:#e4e4e4;"></div>
<div style="left:643px;top:235px;width:1px;height:20px;background:#e4e4e4;"></div>
<div style="left:714px;top:235px;width:1px;height:20px;background:#e4e4e4;"></div>
<div style="left:786px;top:235px;width:1px;height:20px;background:#e4e4e4;"></div>
<div style="left:7px;top:235px;width:29px;height:1px;background:#dcd8f8;"></div>
<div style="left:7px;top:235px;width:1px;height:19px;background:#dcd8f8;"></div>
<div style="left:35px;top:235px;width:1px;height:20px;background:#6a5ac0;"></div>
<div style="left:36px;top:235px;width:1px;height:20px;background:#000000;"></div>
<div style="left:8px;top:253px;width:28px;height:1px;background:#6a5ac0;"></div>
<div style="left:7px;top:254px;width:30px;height:1px;background:#000000;"></div>
<div class="t" style="left:11px;top:234.84px;font-size:12px;line-height:20px;color:#000;">3</div>
<div class="t" style="left:40px;top:231.84px;font-size:12px;line-height:20px;color:#000;transform:scaleX(0.86);transform-origin:0 0;letter-spacing:0.25px;">HUF</div>
<div class="t" style="left:121px;top:231.84px;font-size:12px;line-height:20px;color:#000;transform:scaleX(0.86);transform-origin:0 0;letter-spacing:0.25px;">Magyar forint</div>
<div class="t" style="left:202px;top:231.84px;font-size:12px;line-height:20px;color:#000;transform:scaleX(0.86);transform-origin:0 0;letter-spacing:0.25px;">2007-03-01</div>
<div class="t" style="left:275px;top:231.84px;font-size:12px;line-height:20px;color:#000;transform:scaleX(0.86);transform-origin:0 0;letter-spacing:0.25px;">2007-07-29</div>
<div class="t" style="left:339px;top:231.84px;font-size:12px;line-height:20px;color:#000;transform:scaleX(0.86);transform-origin:0 0;letter-spacing:0.25px;">100</div>
<div class="t" style="left:413px;top:231.84px;font-size:12px;line-height:20px;color:#000;transform:scaleX(0.86);transform-origin:0 0;letter-spacing:0.25px;">Átlagos</div>
<div style="left:37px;top:255px;width:749px;height:19px;background:#aea8d8;"></div>
<div style="left:117px;top:255px;width:1px;height:19px;background:#c8c4ec;"></div>
<div style="left:198px;top:255px;width:1px;height:19px;background:#c8c4ec;"></div>
<div style="left:271px;top:255px;width:1px;height:19px;background:#c8c4ec;"></div>
<div style="left:335px;top:255px;width:1px;height:19px;background:#c8c4ec;"></div>
<div style="left:409px;top:255px;width:1px;height:19px;background:#c8c4ec;"></div>
<div style="left:483px;top:255px;width:1px;height:19px;background:#c8c4ec;"></div>
<div style="left:572px;top:255px;width:1px;height:19px;background:#c8c4ec;"></div>
<div style="left:643px;top:255px;width:1px;height:19px;background:#c8c4ec;"></div>
<div style="left:714px;top:255px;width:1px;height:19px;background:#c8c4ec;"></div>
<div style="left:786px;top:255px;width:1px;height:19px;background:#c8c4ec;"></div>
<div style="left:7px;top:255px;width:1px;height:19px;background:#000000;"></div>
<div style="left:36px;top:255px;width:1px;height:20px;background:#c8c4ec;"></div>
<div style="left:7px;top:274px;width:30px;height:1px;background:#dcd8f8;"></div>
<div class="t" style="left:11px;top:254.84px;font-size:12px;line-height:20px;color:#000;font-weight:bold;-webkit-text-stroke:0.3px #000;">4</div>
<div class="t" style="left:40px;top:251.84px;font-size:12px;line-height:20px;color:#000;transform:scaleX(0.86);transform-origin:0 0;letter-spacing:0.25px;">HUF</div>
<div class="t" style="left:121px;top:251.84px;font-size:12px;line-height:20px;color:#000;transform:scaleX(0.86);transform-origin:0 0;letter-spacing:0.25px;">Magyar forint</div>
<div class="t" style="left:202px;top:251.84px;font-size:12px;line-height:20px;color:#000;transform:scaleX(0.86);transform-origin:0 0;letter-spacing:0.25px;">2007-07-30</div>
<div class="t" style="left:275px;top:251.84px;font-size:12px;line-height:20px;color:#000;transform:scaleX(0.86);transform-origin:0 0;letter-spacing:0.25px;">2007-12-31</div>
<div class="t" style="left:339px;top:251.84px;font-size:12px;line-height:20px;color:#000;transform:scaleX(0.86);transform-origin:0 0;letter-spacing:0.25px;">100</div>
<div class="t" style="left:413px;top:251.84px;font-size:12px;line-height:20px;color:#000;transform:scaleX(0.86);transform-origin:0 0;letter-spacing:0.25px;">Átlagos</div>
<div style="left:7px;top:275px;width:29px;height:1px;background:#dcd8f8;"></div>
<div style="left:5px;top:301px;width:1008px;height:1px;background:#dcd8f8;"></div>
<div style="left:5px;top:303px;width:1009px;height:1px;background:#dcd8f8;"></div>
<div style="left:5px;top:306px;width:1008px;height:1px;background:#6a5ac0;"></div>
<div style="left:5px;top:307px;width:1008px;height:1px;background:#000000;"></div>
<div class="t" style="left:5px;top:304.84px;font-size:12px;line-height:20px;color:#000;transform:scaleX(0.86);transform-origin:0 0;letter-spacing:0.25px;">Fix ár</div>
<div style="left:5px;top:320px;width:28px;height:1px;background:#000000;"></div>
<div style="left:5px;top:322px;width:1008px;height:414px;background:#dcd8f8;"></div>
<div style="left:5px;top:322px;width:1007px;height:1px;background:#6a5ac0;"></div>
<div style="left:5px;top:322px;width:1px;height:413px;background:#6a5ac0;"></div>
<div style="left:6px;top:323px;width:1006px;height:412px;background:#aea8d8;"></div>
<div style="left:6px;top:323px;width:1005px;height:1px;background:#000000;"></div>
<div style="left:6px;top:323px;width:1px;height:411px;background:#000000;"></div>
<div style="left:37px;top:344px;width:974px;height:390px;background:#ffffff;"></div>
<div style="left:7px;top:324px;width:377px;height:1px;background:#dcd8f8;"></div>
<div style="left:7px;top:324px;width:1px;height:20px;background:#dcd8f8;"></div>
<div style="left:37px;top:324px;width:1px;height:20px;background:#dcd8f8;"></div>
<div style="left:37px;top:342px;width:53px;height:1px;background:#6a5ac0;"></div>
<div style="left:37px;top:343px;width:53px;height:1px;background:#000000;"></div>
<div style="left:88px;top:324px;width:1px;height:19px;background:#6a5ac0;"></div>
<div style="left:89px;top:324px;width:1px;height:20px;background:#000000;"></div>
<div class="t" style="left:41px;top:323.84px;font-size:12px;line-height:20px;color:#000;transform:scaleX(0.86);transform-origin:0 0;letter-spacing:0.25px;">Áru kód</div>
<div style="left:90px;top:324px;width:1px;height:20px;background:#dcd8f8;"></div>
<div style="left:90px;top:342px;width:126px;height:1px;background:#6a5ac0;"></div>
<div style="left:90px;top:343px;width:126px;height:1px;background:#000000;"></div>
<div style="left:214px;top:324px;width:1px;height:19px;background:#6a5ac0;"></div>
<div style="left:215px;top:324px;width:1px;height:20px;background:#000000;"></div>
<div class="t" style="left:94px;top:323.84px;font-size:12px;line-height:20px;color:#000;transform:scaleX(0.86);transform-origin:0 0;letter-spacing:0.25px;">Áru név</div>
<div style="left:216px;top:324px;width:1px;height:20px;background:#dcd8f8;"></div>
<div style="left:216px;top:342px;width:37px;height:1px;background:#6a5ac0;"></div>
<div style="left:216px;top:343px;width:37px;height:1px;background:#000000;"></div>
<div style="left:251px;top:324px;width:1px;height:19px;background:#6a5ac0;"></div>
<div style="left:252px;top:324px;width:1px;height:20px;background:#000000;"></div>
<div class="t" style="left:220px;top:323.84px;font-size:12px;line-height:20px;color:#000;transform:scaleX(0.86);transform-origin:0 0;letter-spacing:0.25px;">ETK</div>
<div style="left:253px;top:324px;width:1px;height:20px;background:#dcd8f8;"></div>
<div style="left:253px;top:342px;width:60px;height:1px;background:#6a5ac0;"></div>
<div style="left:253px;top:343px;width:60px;height:1px;background:#000000;"></div>
<div style="left:311px;top:324px;width:1px;height:19px;background:#6a5ac0;"></div>
<div style="left:312px;top:324px;width:1px;height:20px;background:#000000;"></div>
<div class="t" style="left:257px;top:323.84px;font-size:12px;line-height:20px;color:#000;transform:scaleX(0.86);transform-origin:0 0;letter-spacing:0.25px;">Egységár</div>
<div style="left:313px;top:324px;width:1px;height:20px;background:#dcd8f8;"></div>
<div style="left:313px;top:342px;width:72px;height:1px;background:#6a5ac0;"></div>
<div style="left:313px;top:343px;width:72px;height:1px;background:#000000;"></div>
<div style="left:383px;top:324px;width:1px;height:19px;background:#6a5ac0;"></div>
<div style="left:384px;top:324px;width:1px;height:20px;background:#000000;"></div>
<div class="t" style="left:317px;top:323.84px;font-size:12px;line-height:20px;color:#000;transform:scaleX(0.86);transform-origin:0 0;letter-spacing:0.25px;">Megjegyzés</div>
<div style="left:37px;top:344px;width:347px;height:20px;background:#ffffff;"></div>
<div style="left:89px;top:344px;width:1px;height:20px;background:#e4e4e4;"></div>
<div style="left:215px;top:344px;width:1px;height:20px;background:#e4e4e4;"></div>
<div style="left:252px;top:344px;width:1px;height:20px;background:#e4e4e4;"></div>
<div style="left:312px;top:344px;width:1px;height:20px;background:#e4e4e4;"></div>
<div style="left:384px;top:344px;width:1px;height:20px;background:#e4e4e4;"></div>
<div style="left:7px;top:344px;width:29px;height:1px;background:#dcd8f8;"></div>
<div style="left:7px;top:344px;width:1px;height:19px;background:#dcd8f8;"></div>
<div style="left:35px;top:344px;width:1px;height:20px;background:#6a5ac0;"></div>
<div style="left:36px;top:344px;width:1px;height:20px;background:#000000;"></div>
<div style="left:8px;top:362px;width:28px;height:1px;background:#6a5ac0;"></div>
<div style="left:7px;top:363px;width:30px;height:1px;background:#000000;"></div>
<div class="t" style="left:11px;top:343.84px;font-size:12px;line-height:20px;color:#000;">1</div>
<div class="t" style="left:40px;top:340.84px;font-size:12px;line-height:20px;color:#000;transform:scaleX(0.86);transform-origin:0 0;letter-spacing:0.25px;">C0010</div>
<div class="t" style="left:93px;top:340.84px;font-size:12px;line-height:20px;color:#000;transform:scaleX(0.86);transform-origin:0 0;letter-spacing:0.25px;">Csirke alsó comb eh.</div>
<div class="t" style="left:219px;top:340.84px;font-size:12px;line-height:20px;color:#000;transform:scaleX(0.86);transform-origin:0 0;letter-spacing:0.25px;">10010</div>
<div class="t" style="left:13px;width:300px;text-align:right;top:340.84px;font-size:12px;line-height:20px;color:#000;transform:scaleX(0.86);transform-origin:100% 0;letter-spacing:0.45px;">360</div>
<div style="left:37px;top:364px;width:347px;height:20px;background:#f0f0f0;"></div>
<div style="left:89px;top:364px;width:1px;height:20px;background:#e4e4e4;"></div>
<div style="left:215px;top:364px;width:1px;height:20px;background:#e4e4e4;"></div>
<div style="left:252px;top:364px;width:1px;height:20px;background:#e4e4e4;"></div>
<div style="left:312px;top:364px;width:1px;height:20px;background:#e4e4e4;"></div>
<div style="left:384px;top:364px;width:1px;height:20px;background:#e4e4e4;"></div>
<div style="left:7px;top:364px;width:29px;height:1px;background:#dcd8f8;"></div>
<div style="left:7px;top:364px;width:1px;height:19px;background:#dcd8f8;"></div>
<div style="left:35px;top:364px;width:1px;height:20px;background:#6a5ac0;"></div>
<div style="left:36px;top:364px;width:1px;height:20px;background:#000000;"></div>
<div style="left:8px;top:382px;width:28px;height:1px;background:#6a5ac0;"></div>
<div style="left:7px;top:383px;width:30px;height:1px;background:#000000;"></div>
<div class="t" style="left:11px;top:363.84px;font-size:12px;line-height:20px;color:#000;">2</div>
<div class="t" style="left:40px;top:360.84px;font-size:12px;line-height:20px;color:#000;transform:scaleX(0.86);transform-origin:0 0;letter-spacing:0.25px;">10002</div>
<div class="t" style="left:93px;top:360.84px;font-size:12px;line-height:20px;color:#000;transform:scaleX(0.86);transform-origin:0 0;letter-spacing:0.25px;">Tepsis csirke</div>
<div class="t" style="left:219px;top:360.84px;font-size:12px;line-height:20px;color:#000;transform:scaleX(0.86);transform-origin:0 0;letter-spacing:0.25px;">10011</div>
<div class="t" style="left:13px;width:300px;text-align:right;top:360.84px;font-size:12px;line-height:20px;color:#000;transform:scaleX(0.86);transform-origin:100% 0;letter-spacing:0.45px;">375</div>
<div style="left:37px;top:384px;width:347px;height:20px;background:#ffffff;"></div>
<div style="left:89px;top:384px;width:1px;height:20px;background:#e4e4e4;"></div>
<div style="left:215px;top:384px;width:1px;height:20px;background:#e4e4e4;"></div>
<div style="left:252px;top:384px;width:1px;height:20px;background:#e4e4e4;"></div>
<div style="left:312px;top:384px;width:1px;height:20px;background:#e4e4e4;"></div>
<div style="left:384px;top:384px;width:1px;height:20px;background:#e4e4e4;"></div>
<div style="left:7px;top:384px;width:29px;height:1px;background:#dcd8f8;"></div>
<div style="left:7px;top:384px;width:1px;height:19px;background:#dcd8f8;"></div>
<div style="left:35px;top:384px;width:1px;height:20px;background:#6a5ac0;"></div>
<div style="left:36px;top:384px;width:1px;height:20px;background:#000000;"></div>
<div style="left:8px;top:402px;width:28px;height:1px;background:#6a5ac0;"></div>
<div style="left:7px;top:403px;width:30px;height:1px;background:#000000;"></div>
<div class="t" style="left:11px;top:383.84px;font-size:12px;line-height:20px;color:#000;">3</div>
<div class="t" style="left:40px;top:380.84px;font-size:12px;line-height:20px;color:#000;transform:scaleX(0.86);transform-origin:0 0;letter-spacing:0.25px;">C0001</div>
<div class="t" style="left:93px;top:380.84px;font-size:12px;line-height:20px;color:#000;transform:scaleX(0.86);transform-origin:0 0;letter-spacing:0.25px;">Egész csirke eh.</div>
<div class="t" style="left:219px;top:380.84px;font-size:12px;line-height:20px;color:#000;transform:scaleX(0.86);transform-origin:0 0;letter-spacing:0.25px;">10001</div>
<div class="t" style="left:13px;width:300px;text-align:right;top:380.84px;font-size:12px;line-height:20px;color:#000;transform:scaleX(0.86);transform-origin:100% 0;letter-spacing:0.45px;">375</div>
<div style="left:37px;top:404px;width:347px;height:20px;background:#f0f0f0;"></div>
<div style="left:89px;top:404px;width:1px;height:20px;background:#e4e4e4;"></div>
<div style="left:215px;top:404px;width:1px;height:20px;background:#e4e4e4;"></div>
<div style="left:252px;top:404px;width:1px;height:20px;background:#e4e4e4;"></div>
<div style="left:312px;top:404px;width:1px;height:20px;background:#e4e4e4;"></div>
<div style="left:384px;top:404px;width:1px;height:20px;background:#e4e4e4;"></div>
<div style="left:7px;top:404px;width:29px;height:1px;background:#dcd8f8;"></div>
<div style="left:7px;top:404px;width:1px;height:19px;background:#dcd8f8;"></div>
<div style="left:35px;top:404px;width:1px;height:20px;background:#6a5ac0;"></div>
<div style="left:36px;top:404px;width:1px;height:20px;background:#000000;"></div>
<div style="left:8px;top:422px;width:28px;height:1px;background:#6a5ac0;"></div>
<div style="left:7px;top:423px;width:30px;height:1px;background:#000000;"></div>
<div class="t" style="left:11px;top:403.84px;font-size:12px;line-height:20px;color:#000;">4</div>
<div class="t" style="left:40px;top:400.84px;font-size:12px;line-height:20px;color:#000;transform:scaleX(0.86);transform-origin:0 0;letter-spacing:0.25px;">C0002</div>
<div class="t" style="left:93px;top:400.84px;font-size:12px;line-height:20px;color:#000;transform:scaleX(0.86);transform-origin:0 0;letter-spacing:0.25px;">Csirke mellfilé eh.</div>
<div class="t" style="left:219px;top:400.84px;font-size:12px;line-height:20px;color:#000;transform:scaleX(0.86);transform-origin:0 0;letter-spacing:0.25px;">10002</div>
<div class="t" style="left:13px;width:300px;text-align:right;top:400.84px;font-size:12px;line-height:20px;color:#000;transform:scaleX(0.86);transform-origin:100% 0;letter-spacing:0.45px;">765</div>
<div style="left:37px;top:424px;width:347px;height:20px;background:#ffffff;"></div>
<div style="left:89px;top:424px;width:1px;height:20px;background:#e4e4e4;"></div>
<div style="left:215px;top:424px;width:1px;height:20px;background:#e4e4e4;"></div>
<div style="left:252px;top:424px;width:1px;height:20px;background:#e4e4e4;"></div>
<div style="left:312px;top:424px;width:1px;height:20px;background:#e4e4e4;"></div>
<div style="left:384px;top:424px;width:1px;height:20px;background:#e4e4e4;"></div>
<div style="left:7px;top:424px;width:29px;height:1px;background:#dcd8f8;"></div>
<div style="left:7px;top:424px;width:1px;height:19px;background:#dcd8f8;"></div>
<div style="left:35px;top:424px;width:1px;height:20px;background:#6a5ac0;"></div>
<div style="left:36px;top:424px;width:1px;height:20px;background:#000000;"></div>
<div style="left:8px;top:442px;width:28px;height:1px;background:#6a5ac0;"></div>
<div style="left:7px;top:443px;width:30px;height:1px;background:#000000;"></div>
<div class="t" style="left:11px;top:423.84px;font-size:12px;line-height:20px;color:#000;">5</div>
<div class="t" style="left:40px;top:420.84px;font-size:12px;line-height:20px;color:#000;transform:scaleX(0.86);transform-origin:0 0;letter-spacing:0.25px;">C0007</div>
<div class="t" style="left:93px;top:420.84px;font-size:12px;line-height:20px;color:#000;transform:scaleX(0.86);transform-origin:0 0;letter-spacing:0.25px;">Csirke szárny eh.</div>
<div class="t" style="left:219px;top:420.84px;font-size:12px;line-height:20px;color:#000;transform:scaleX(0.86);transform-origin:0 0;letter-spacing:0.25px;">10007</div>
<div class="t" style="left:13px;width:300px;text-align:right;top:420.84px;font-size:12px;line-height:20px;color:#000;transform:scaleX(0.86);transform-origin:100% 0;letter-spacing:0.45px;">248</div>
<div style="left:37px;top:444px;width:347px;height:19px;background:#add8e6;"></div>
<div style="left:89px;top:444px;width:1px;height:19px;background:#eef8ff;"></div>
<div style="left:215px;top:444px;width:1px;height:19px;background:#eef8ff;"></div>
<div style="left:252px;top:444px;width:1px;height:19px;background:#eef8ff;"></div>
<div style="left:312px;top:444px;width:1px;height:19px;background:#eef8ff;"></div>
<div style="left:384px;top:444px;width:1px;height:19px;background:#eef8ff;"></div>
<div style="left:7px;top:444px;width:1px;height:19px;background:#000000;"></div>
<div style="left:36px;top:444px;width:1px;height:20px;background:#c8c4ec;"></div>
<div style="left:7px;top:463px;width:30px;height:1px;background:#dcd8f8;"></div>
<div class="t" style="left:11px;top:443.84px;font-size:12px;line-height:20px;color:#000;font-weight:bold;-webkit-text-stroke:0.3px #000;">6</div>
<div style="left:7px;top:464px;width:29px;height:1px;background:#dcd8f8;"></div>
<div style="left:37px;top:443px;width:50px;height:17px;border:2px solid #000"></div>
<div style="left:4px;top:741px;width:67px;height:1px;background:#6a5ac0;"></div>
<div style="left:4px;top:741px;width:1px;height:16px;background:#6a5ac0;"></div>
<div style="left:4px;top:756px;width:67px;height:1px;background:#dcd8f8;"></div>
<div style="left:70px;top:741px;width:1px;height:16px;background:#dcd8f8;"></div>
<div style="left:73px;top:741px;width:98px;height:1px;background:#6a5ac0;"></div>
<div style="left:73px;top:741px;width:1px;height:16px;background:#6a5ac0;"></div>
<div style="left:73px;top:756px;width:98px;height:1px;background:#dcd8f8;"></div>
<div style="left:170px;top:741px;width:1px;height:16px;background:#dcd8f8;"></div>
<div style="left:173px;top:742px;width:18px;height:1px;background:#6a5ac0;"></div>
<div style="left:173px;top:742px;width:1px;height:14px;background:#6a5ac0;"></div>
<div style="left:173px;top:755px;width:18px;height:1px;background:#dcd8f8;"></div>
<div style="left:190px;top:742px;width:1px;height:14px;background:#dcd8f8;"></div>
<div style="left:193px;top:741px;width:806px;height:1px;background:#6a5ac0;"></div>
<div style="left:193px;top:741px;width:1px;height:16px;background:#6a5ac0;"></div>
<div style="left:193px;top:756px;width:806px;height:1px;background:#dcd8f8;"></div>
<div style="left:998px;top:741px;width:1px;height:16px;background:#dcd8f8;"></div>
<div class="t" style="left:5px;top:742px;width:65px;height:14px;overflow:hidden;"><div class="t" style="left:0px;top:-3.16px;font-size:12px;line-height:20px;letter-spacing:-0.3px;white-space:nowrap">-v1.89-pre1X</div></div>
<div class="t" style="left:74px;top:738.84px;font-size:12px;line-height:20px;color:#000;letter-spacing:-0.2px;">6 / 6</div>
<svg style="position:absolute;left:173px;top:742px" width="18" height="14" viewBox="0 0 18 14"><circle cx="7" cy="6.5" r="5" fill="#fff"/><path d="M3.5,10 A5 5 0 0 1 10.5,3" fill="none" stroke="#000" stroke-width="1.4"/></svg>
<div class="t" style="left:193px;top:738.84px;font-size:12px;line-height:20px;color:#000;letter-spacing:-0.33px;">(*)[Vállalat áru]-&gt;Az áru egyedi kódja</div>
<svg style="position:absolute;left:1000px;top:744px" width="18" height="15" viewBox="0 0 18 15"><path d="M2.5,14.5 L16.5,0.5 M6.5,14.5 L16.5,4.5 M10.5,14.5 L16.5,8.5 M14.5,14.5 L16.5,12.5" stroke="#ffffff" stroke-width="1"/><path d="M4,14.5 L16.5,2 M8,14.5 L16.5,6 M12,14.5 L16.5,10" stroke="#6a5ac0" stroke-width="1.8"/></svg>
</body></html>
